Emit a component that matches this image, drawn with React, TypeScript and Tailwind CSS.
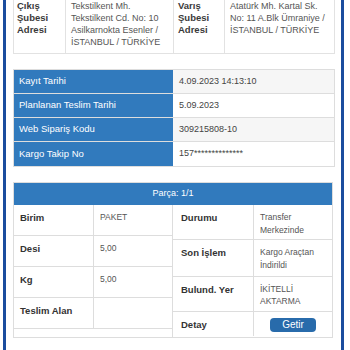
export default function App() {
  const info = [
    ["Kayıt Tarihi", "4.09.2023 14:13:10"],
    ["Planlanan Teslim Tarihi", "5.09.2023"],
    ["Web Sipariş Kodu", "309215808-10"],
    ["Kargo Takip No", "157**************"],
  ];
  const left = [
    ["Birim", "PAKET"],
    ["Desi", "5,00"],
    ["Kg", "5,00"],
    ["Teslim Alan", ""],
  ];
  return (
    <div className="w-[350px] h-[350px] overflow-hidden bg-white [font-family:'Liberation_Sans',Arial,sans-serif]">
      <div className="ml-[3px] w-[341px] h-[400px] border-x-[3px] border-[#1b4d9e] pl-[7px] pr-[6px]">
        {/* Address table */}
        <div className="mt-[-6px] grid grid-cols-[52px_108px_51px_111px] border border-[#e2e2e2]">
          <div className="pl-[3px] pt-[5px] pb-[5px] text-[9.5px] leading-[12px] font-bold text-[#3a3a3a] border-r border-[#e2e2e2]">
            <div>Çıkış</div>
            <div>Şubesi</div>
            <div>Adresi</div>
          </div>
          <div className="pl-[5px] pt-[5px] pb-[5px] text-[9px] leading-[12px] text-[#555] border-r border-[#e2e2e2]">
            <div>Tekstilkent Mh.</div>
            <div>Tekstilkent Cd. No: 10</div>
            <div>Asilkarnokta Esenler /</div>
            <div>İSTANBUL / TÜRKİYE</div>
          </div>
          <div className="pl-[4px] pt-[5px] pb-[5px] text-[9.5px] leading-[12px] font-bold text-[#3a3a3a] border-r border-[#e2e2e2]">
            <div>Varış</div>
            <div>Şubesi</div>
            <div>Adresi</div>
          </div>
          <div className="pl-[5px] pt-[5px] pb-[5px] text-[9px] leading-[12px] text-[#555]">
            <div>Atatürk Mh. Kartal Sk.</div>
            <div>No: 11 A.Blk Ümraniye /</div>
            <div>İSTANBUL / TÜRKİYE</div>
          </div>
        </div>

        {/* Info table */}
        <div className="mt-[15px] border border-[#dddddd]">
          {info.map(([k, v], i) => (
            <div
              key={k}
              className={`grid grid-cols-[159px_1fr] h-[24px] ${i < 3 ? "border-b border-[#dddddd]" : ""}`}
            >
              <div className="bg-[#317abd] text-white text-[9.5px] flex items-center pl-[5px]">{k}</div>
              <div
                className={`${i % 2 === 0 ? "bg-[#f6f6f6]" : "bg-white"} text-[#444] text-[9px] flex items-center pl-[6px]`}
              >
                {v}
              </div>
            </div>
          ))}
        </div>

        {/* Parça */}
        <div className="mt-[15px] mr-[2px] border border-[#dddddd]">
          <div className="h-[22px] bg-[#317abd] text-white text-[9px] flex items-center justify-center">
            Parça: 1/1
          </div>
          <div className="grid grid-cols-[159px_1fr]">
            <div className="border-r border-[#dddddd] h-[132px]">
              {left.map(([k, v]) => (
                <div key={k} className="grid grid-cols-[80px_1fr] h-[31px] border-b border-[#dddddd]">
                  <div className="pl-[6px] pt-[7px] text-[9.5px] leading-[11px] font-bold text-[#333] border-r border-[#dddddd]">
                    {k}
                  </div>
                  <div className="pl-[6px] pt-[7px] text-[8.5px] leading-[11px] text-[#555]">{v}</div>
                </div>
              ))}
            </div>
            <div>
              <div className="grid grid-cols-[81px_1fr] h-[35px] border-b border-[#dddddd]">
                <div className="pl-[8px] pt-[7px] text-[9.5px] leading-[11px] font-bold text-[#333] border-r border-[#dddddd]">Durumu</div>
                <div className="pl-[6px] pt-[6px] text-[8.5px] leading-[13px] text-[#555]">
                  <div>Transfer</div>
                  <div>Merkezinde</div>
                </div>
              </div>
              <div className="grid grid-cols-[81px_1fr] h-[37px] border-b border-[#dddddd]">
                <div className="pl-[8px] pt-[7px] text-[9.5px] leading-[11px] font-bold text-[#333] border-r border-[#dddddd]">Son İşlem</div>
                <div className="pl-[6px] pt-[6px] text-[8.5px] leading-[13px] text-[#555]">
                  <div>Kargo Araçtan</div>
                  <div>İndirildi</div>
                </div>
              </div>
              <div className="grid grid-cols-[81px_1fr] h-[35px] border-b border-[#dddddd]">
                <div className="pl-[8px] pt-[7px] text-[9.5px] leading-[11px] font-bold text-[#333] border-r border-[#dddddd]">Bulund. Yer</div>
                <div className="pl-[6px] pt-[6px] text-[8.5px] leading-[12px] text-[#555]">
                  <div>İKİTELLİ</div>
                  <div>AKTARMA</div>
                </div>
              </div>
              <div className="grid grid-cols-[81px_1fr] h-[24px]">
                <div className="pl-[8px] pt-[7px] text-[9.5px] leading-[11px] font-bold text-[#333] border-r border-[#dddddd]">Detay</div>
                <div className="flex justify-center pt-[6px]">
                  <div className="w-[46px] h-[14px] rounded-[4px] bg-[#286bab] text-white text-[10px] leading-[14px] text-center">
                    Getir
                  </div>
                </div>
              </div>
            </div>
          </div>
        </div>

        {/* Red bar */}
        <div className="mt-[14px] mr-[2px] h-[20px] grid grid-cols-[80px_112px_1fr] bg-[#d9534f]">
          <div className="border-r border-[#e79a98]"></div>
          <div className="border-r border-[#e79a98]"></div>
          <div></div>
        </div>
      </div>
    </div>
  );
}
